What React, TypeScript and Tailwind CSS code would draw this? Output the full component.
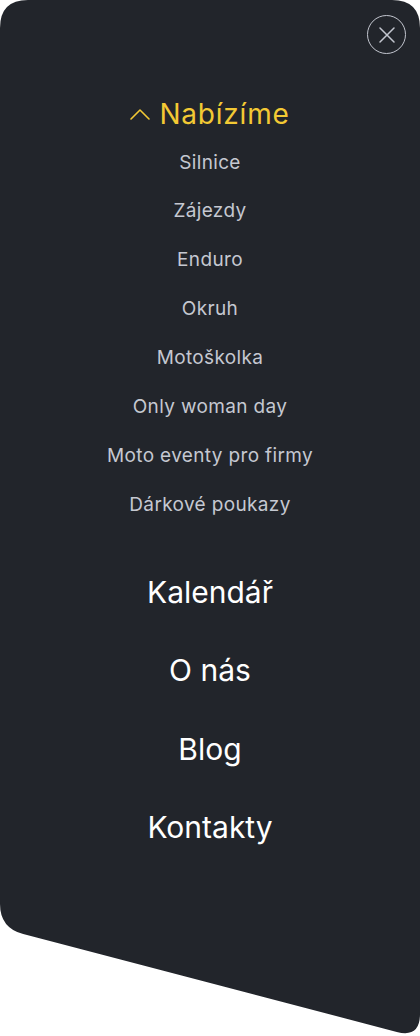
const offers = [
  "Silnice",
  "Zájezdy",
  "Enduro",
  "Okruh",
  "Motoškolka",
  "Only woman day",
  "Moto eventy pro firmy",
  "Dárkové poukazy",
];

const pages = ["Kalendář", "O nás", "Blog", "Kontakty"];

// panel outline: rounded rectangle with a slanted bottom edge
const panelClip =
  "[clip-path:path('M28_0H392Q420_0_420_28V1014Q420_1038_396.8_1031.9L23.2_934.1Q0_928_0_904V28Q0_0_28_0Z')]";

export default function App() {
  return (
    <div className="h-[1036px] w-[420px] overflow-hidden bg-white font-['Inter',sans-serif]">
      <div className={`flex h-full w-full flex-col bg-[#22252b] ${panelClip}`}>
        <div className="flex justify-end pr-[14px] pt-[15px]">
          <button
            aria-label="Zavřít menu"
            className="flex h-[39px] w-[39px] items-center justify-center rounded-full border-[1.5px] border-[#c3c6cf]"
          >
            <svg width="16" height="16" viewBox="0 0 16 16" fill="none" stroke="#c3c6cf" strokeWidth="1.5" strokeLinecap="round">
              <path d="M1 1l14 14M15 1L1 15" />
            </svg>
          </button>
        </div>

        <nav className="mt-[35.6px] flex flex-col items-center">
          <button className="flex h-[48.86px] items-center gap-[9px] text-[28px] text-[#f3c934]">
            <svg width="20" height="11" viewBox="0 0 20 11" fill="none" stroke="#f3c934" strokeWidth="1.6" strokeLinecap="round" strokeLinejoin="round">
              <path d="M1 10l9-9 9 9" />
            </svg>
            <span className="tracking-[0.8px]">Nabízíme</span>
          </button>
          {offers.map((o) => (
            <a key={o} className="flex h-[48.86px] items-center text-[19px] tracking-[0.35px] text-[#c5c8d1]">
              {o}
            </a>
          ))}

          <div className="mt-[24px] flex flex-col items-center">
            {pages.map((p) => (
              <a key={p} className="flex h-[78.3px] items-center text-[30px] text-white">
                {p}
              </a>
            ))}
          </div>
        </nav>
      </div>
    </div>
  );
}
